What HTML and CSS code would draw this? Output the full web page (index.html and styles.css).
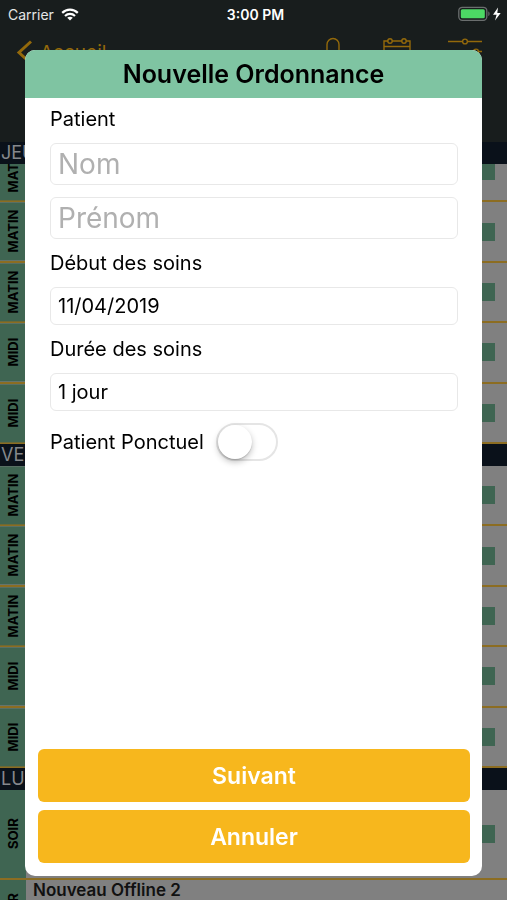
FILE: index.html
```html
<!DOCTYPE html>
<html lang="fr">
<head>
<meta charset="utf-8">
<meta name="viewport" content="width=device-width, initial-scale=1">
<title>Nouvelle Ordonnance</title>
<link rel="stylesheet" href="styles.css">
</head>
<body>
<div class="screen">
  <header class="topbar">
    <div class="status">
      <div class="carrier">
        <span>Carrier</span>
        <svg width="18" height="13" viewBox="0 0 18 13" fill="none" stroke="#fff" stroke-width="2.2">
          <path d="M1.2 4.9C5.6.6 12.4.6 16.800 4.900"/>
          <path d="M4 8C6.900 5.200 11.100 5.200 14 8"/>
          <path d="M9 12.600 6.200 9.800C7.800 8.300 10.200 8.300 11.800 9.800Z" fill="#fff" stroke="none"/>
        </svg>
      </div>
      <span class="clock">3:00 PM</span>
      <div class="power">
        <svg width="45" height="16" viewBox="0 0 45 16">
          <rect x=".8" y="1.300" width="28" height="13" rx="3.500" fill="none" stroke="#6a6e6e" stroke-width="1.300"/>
          <rect x="2.800" y="3.300" width="24" height="9" rx="1.500" fill="#4cd964"/>
          <path d="M30.300 5.500C32 6 32 9.500 30.300 10Z" fill="#6a6e6e"/>
          <path d="M40 1.500 35 8.800H38.600L37 14.500 42.700 7H39.300Z" fill="#fff"/>
        </svg>
      </div>
    </div>
    <nav class="nav">
      <a class="back" href="#">
        <svg width="16" height="24" viewBox="0 0 16 24" fill="none" stroke="currentColor" stroke-width="3"><path d="M15 1.500 3 12.500 15 23.500"/></svg>
        <span>Accueil</span>
      </a>
      <div class="tools">
        <svg width="28" height="28" viewBox="0 0 28 28" fill="none" stroke="currentColor" stroke-width="1.400"><path d="M9 20V8.500A6 6 0 0 1 21 8.500V20M6 20H24"/></svg>
        <svg width="28" height="28" viewBox="0 0 28 28" fill="none" stroke="currentColor" stroke-width="1.400"><path d="M5 5H1V26H27V5H23M9 5H19M1 10.500H27"/><circle cx="7" cy="5" r="2.200"/><circle cx="21" cy="5" r="2.200"/></svg>
        <svg width="34" height="28" viewBox="0 0 34 28" fill="none" stroke="currentColor" stroke-width="1.400"><path d="M0 5.500H14M20 5.500H34M0 15.500H25M31 15.500H34"/><circle cx="17" cy="5.500" r="2.400"/><circle cx="28" cy="15.500" r="2.400"/></svg>
      </div>
    </nav>
  </header>

  <main class="agenda">
    <section class="day day-first">
      <h2 class="day-title">JEUDI</h2>
      <ul class="visits">
        <li class="visit"><span class="slot">MATIN</span><i class="mark"></i></li>
        <li class="visit"><span class="slot">MATIN</span><i class="mark"></i></li>
        <li class="visit"><span class="slot">MATIN</span><i class="mark"></i></li>
        <li class="visit"><span class="slot">MIDI</span><i class="mark"></i></li>
        <li class="visit"><span class="slot">MIDI</span><i class="mark"></i></li>
      </ul>
    </section>
    <section class="day">
      <h2 class="day-title">VENDREDI</h2>
      <ul class="visits">
        <li class="visit"><span class="slot">MATIN</span><i class="mark"></i></li>
        <li class="visit"><span class="slot">MATIN</span><i class="mark"></i></li>
        <li class="visit"><span class="slot">MATIN</span><i class="mark"></i></li>
        <li class="visit"><span class="slot">MIDI</span><i class="mark"></i></li>
        <li class="visit"><span class="slot">MIDI</span><i class="mark"></i></li>
      </ul>
    </section>
    <section class="day">
      <h2 class="day-title">LUNDI</h2>
      <ul class="visits visits-mixed">
        <li class="visit"><span class="slot">SOIR</span><i class="mark"></i></li>
        <li class="visit"><span class="slot">SOIR</span><strong class="name">Nouveau Offline 2</strong><i class="mark"></i></li>
      </ul>
    </section>
  </main>
</div>

<form class="modal" role="dialog" aria-labelledby="title">
  <h1 class="modal-title" id="title">Nouvelle Ordonnance</h1>
  <div class="fields">
    <label for="nom">Patient</label>
    <input class="box box-large" id="nom" type="text" placeholder="Nom">
    <input class="box box-large" type="text" placeholder="Prénom" aria-label="Prénom">
    <label for="debut">Début des soins</label>
    <input class="box" id="debut" type="text" value="11/04/2019">
    <label for="duree">Durée des soins</label>
    <select class="box" id="duree"><option>1 jour</option></select>
    <div class="switch-row">
      <label for="ponctuel">Patient Ponctuel</label>
      <input class="switch" id="ponctuel" type="checkbox" role="switch">
    </div>
  </div>
  <div class="actions">
    <button class="action" type="button">Suivant</button>
    <button class="action" type="button">Annuler</button>
  </div>
</form>
</body>
</html>
```
FILE: styles.css
```css
* {
  box-sizing: border-box;
}

body {
  margin: 0;
  font-family: Inter, "Liberation Sans", sans-serif;
  color: #000;
  background: #808080;
}

.screen {
  height: 100vh;
  overflow: hidden;
}

.topbar {
  height: 142px;
  background: #181d1d;
}

.status {
  display: grid;
  grid-template-columns: 1fr auto 1fr;
  align-items: center;
  height: 28px;
  padding: 0 4px 0 8px;
  color: #fff;
  font-size: 14px;
}

.carrier {
  display: flex;
  align-items: center;
  gap: 7px;
  color: #e4e6e6;
}

.clock {
  font-weight: 600;
}

.power {
  display: flex;
  justify-content: flex-end;
}

.nav {
  display: flex;
  justify-content: space-between;
  padding: 8px 25px 0 16px;
  color: #93690b;
}

.back {
  display: flex;
  align-items: center;
  gap: 8px;
  height: 32px;
  color: inherit;
  font-size: 19px;
  text-decoration: none;
}

.tools {
  display: flex;
  gap: 37px;
}

.day-title {
  height: 22px;
  margin: 0;
  padding-left: 1px;
  background: #0a111a;
  color: #85888c;
  font-size: 18px;
  font-weight: 400;
  line-height: 22px;
}

.day-first {
  display: grid;
  isolation: isolate;
}

.day-first > * {
  grid-area: 1 / 1;
}

.day-first .day-title {
  z-index: 1;
}

.visits {
  display: grid;
  grid-auto-rows: 1fr;
  height: 302px;
  margin: 0;
  padding: 0;
  list-style: none;
}

.visits-mixed {
  grid-template-rows: 90px 60px;
  height: auto;
}

.visit {
  display: flex;
  align-items: center;
  border-bottom: 2px solid #8c6d22;
  padding-right: 12px;
}

.slot {
  display: flex;
  align-items: center;
  justify-content: center;
  align-self: stretch;
  width: 26px;
  background: #3f6552;
  font-size: 13px;
  font-weight: 700;
  writing-mode: vertical-rl;
  transform: rotate(180deg);
}

.mark {
  width: 75px;
  height: 18px;
  margin-left: auto;
  background: #3f6552;
}

.name {
  align-self: flex-start;
  padding-left: 7px;
  color: #111;
  font-size: 17px;
  font-weight: 600;
  line-height: 20px;
}

.modal {
  position: fixed;
  inset: 50px 25px 24px;
  z-index: 2;
  display: flex;
  flex-direction: column;
  overflow: hidden;
  border-radius: 10px;
  background: #fff;
}

.modal-title {
  margin: 0;
  background: #7fc4a2;
  font-size: 25px;
  font-weight: 600;
  line-height: 48px;
  text-align: center;
}

.fields {
  display: flex;
  flex: 1;
  flex-direction: column;
  gap: 12px;
  padding: 9px 24px 0 25px;
  font-size: 20px;
  line-height: 24px;
}

.box {
  width: 100%;
  height: 38px;
  margin: 0;
  padding: 0 7px;
  border: 1px solid #e8e8e8;
  border-radius: 6px;
  outline: 0;
  appearance: none;
  background: #fff;
  color: #000;
  font: inherit;
}

.box-large {
  height: 42px;
  font-size: 28px;
}

.box::placeholder {
  color: #b0b0b0;
  opacity: 1;
}

.switch-row {
  display: flex;
  align-items: center;
  gap: 12px;
}

.switch {
  width: 62px;
  height: 38px;
  margin: 0;
  border: 2px solid #e5e5e5;
  border-radius: 19px;
  appearance: none;
  background: #fff;
}

.switch::before {
  content: "";
  display: block;
  width: 34px;
  height: 34px;
  border-radius: 50%;
  background: #fff;
  box-shadow: 0 3px 6px rgba(0, 0, 0, 0.25), 0 1px 1px rgba(0, 0, 0, 0.15);
}

.switch:checked {
  background: #4cd964;
}

.switch:checked::before {
  margin-left: auto;
}

.actions {
  display: grid;
  gap: 8px;
  padding: 0 12px 13px 13px;
}

.action {
  height: 53px;
  border: 0;
  border-radius: 6px;
  background: #f7b71d;
  color: #fff;
  font: inherit;
  font-size: 23px;
  font-weight: 600;
}
```
